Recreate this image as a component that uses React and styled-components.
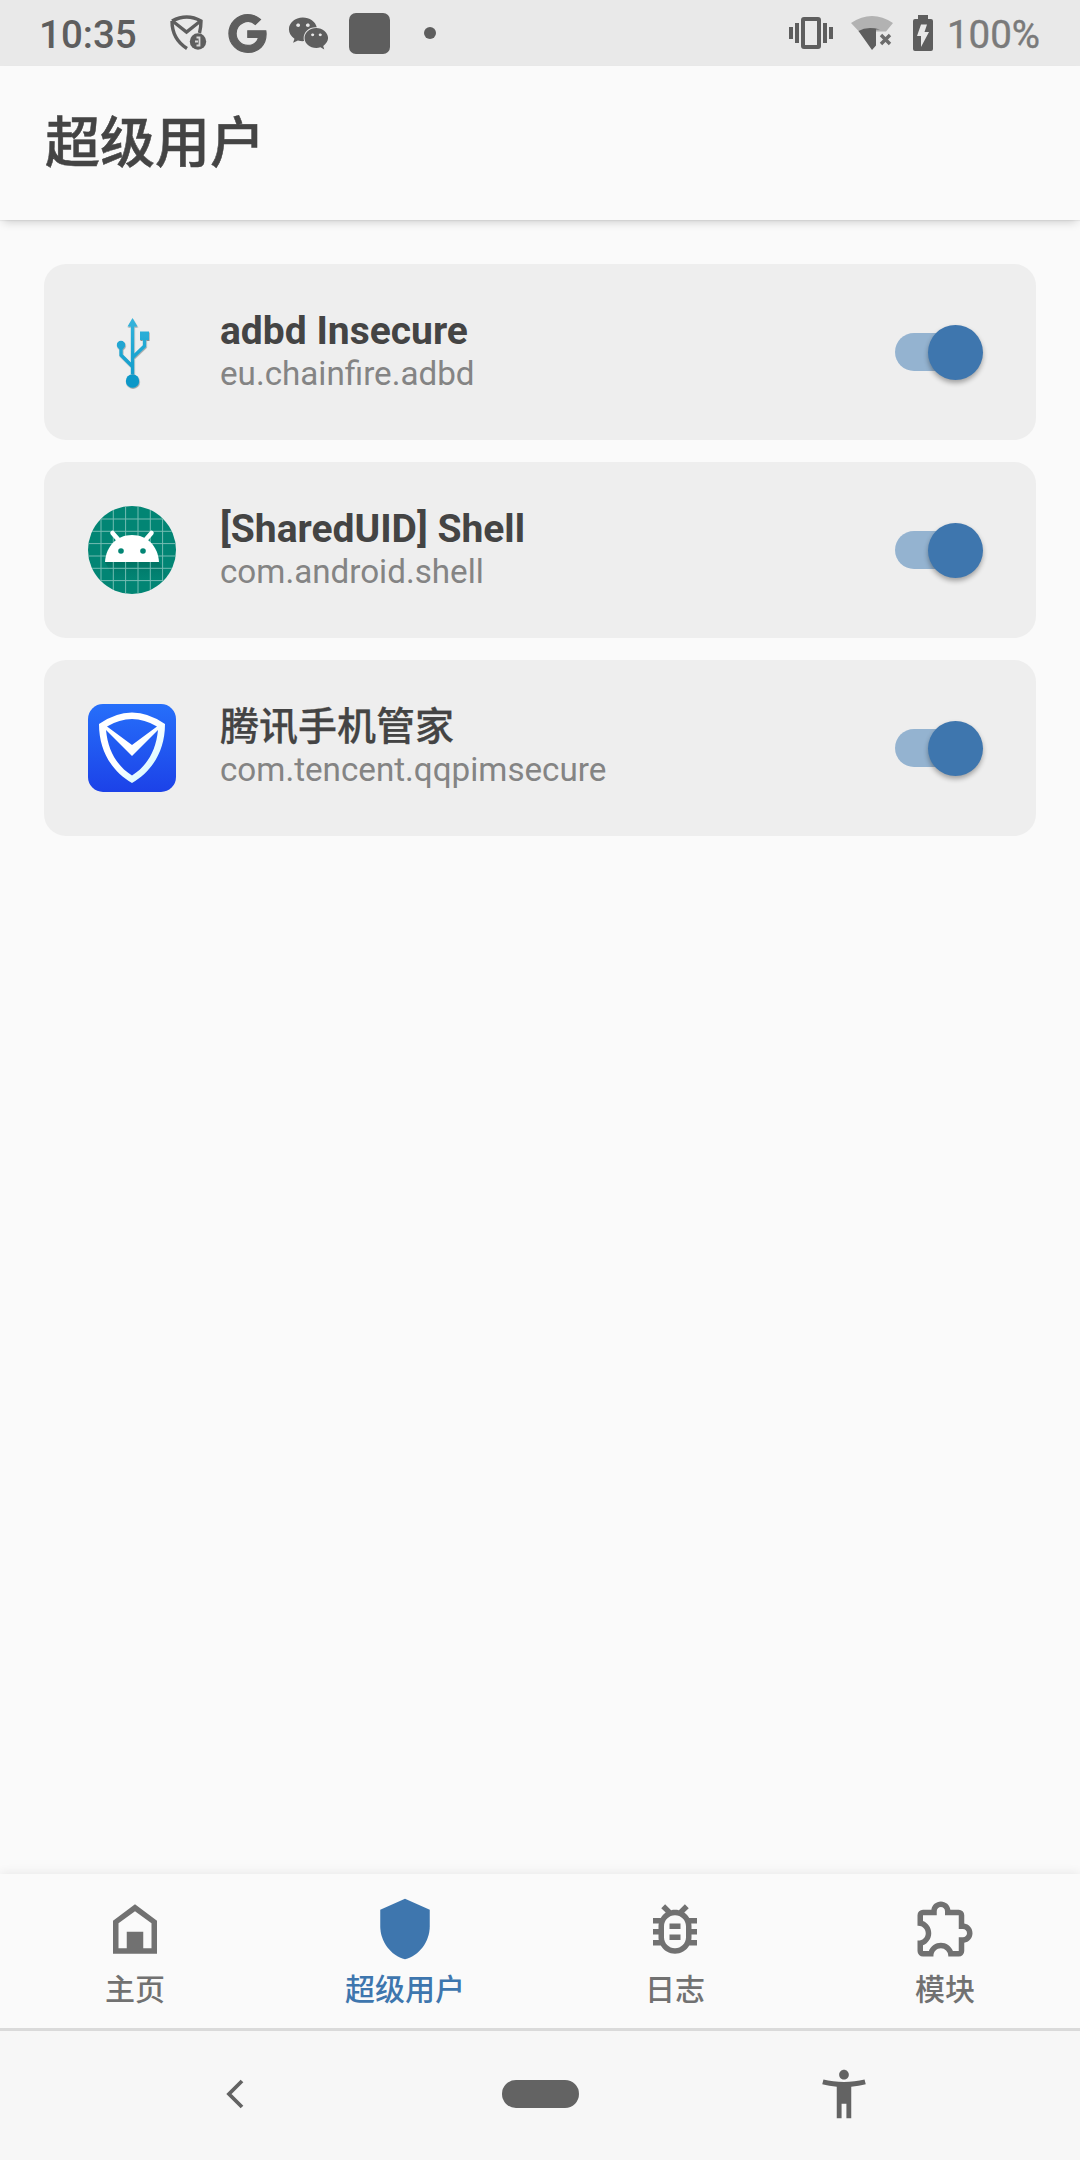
import React from "react";
import styled, { createGlobalStyle } from "styled-components";
import { FaGoogle, FaWeixin } from "react-icons/fa";

const GlobalStyle = createGlobalStyle`
  * { box-sizing: border-box; }
  body {
    margin: 0;
    background: #fafafa;
    font-family: Roboto, "Noto Sans CJK SC", sans-serif;
  }
`;

const Screen = styled.div`
  width: 1080px;
  height: 2160px;
  display: flex;
  flex-direction: column;
  background: #fafafa;
  overflow: hidden;
`;

const StatusBar = styled.header`
  height: 66px;
  flex: none;
  display: flex;
  align-items: center;
  justify-content: space-between;
  padding: 0 40px 0 39px;
  background: #e9e9e9;
  color: #5e5e5e;
`;

const StatusGroup = styled.div`
  display: flex;
  align-items: center;
  height: 66px;
`;

const Clock = styled.span`
  width: 131px;
  font-size: 38.5px;
  line-height: 66px;
  font-weight: 500;
  padding-top: 3px;
`;

const BatteryText = styled.span`
  font-size: 38.5px;
  line-height: 66px;
  padding-top: 3px;
  margin-left: 14px;
  color: #7a7a7a;
  -webkit-text-stroke: 0.4px #7a7a7a;
`;

const StatusIcon = styled.span`
  display: flex;
  margin-left: ${(p) => p.$gap || 0}px;
`;

const Square = styled.span`
  width: 41px;
  height: 41px;
  margin-left: 20px;
  border-radius: 7px;
  background: #5e5e5e;
`;

const Dot = styled.span`
  width: 12px;
  height: 12px;
  margin-left: 34px;
  border-radius: 50%;
  background: #5e5e5e;
`;

const Toolbar = styled.div`
  height: 154px;
  flex: none;
  display: flex;
  align-items: center;
  padding: 0 45px;
  background: #fafafa;
  box-shadow: 0 5px 9px -3px rgba(0, 0, 0, 0.18), 0 1px 1px rgba(0, 0, 0, 0.05);
`;

const Title = styled.h1`
  margin: 0;
  font-size: 55px;
  line-height: 80px;
  font-weight: 500;
  color: #444;
  -webkit-text-stroke: 0.5px #444;
`;

const List = styled.main`
  flex: 1;
  display: flex;
  flex-direction: column;
  gap: 22px;
  padding: 44px;
`;

const Card = styled.section`
  height: 176px;
  display: flex;
  align-items: center;
  padding: 0 53.5px 0 44px;
  border-radius: 22px;
  background: #eee;
`;

const AppIcon = styled.div`
  width: 88px;
  height: 88px;
  flex: none;
`;

const AppText = styled.div`
  flex: 1;
  margin: 0 0 2px 44px;
`;

const AppName = styled.div`
  font-size: 39px;
  line-height: 45px;
  height: 45px;
  font-weight: ${(p) => (p.$cjk ? 500 : 700)};
  color: #444;
  -webkit-text-stroke: ${(p) => (p.$cjk ? "0.25px #444" : "0")};
`;

const PackageName = styled.div`
  font-size: 33.2px;
  line-height: 39px;
  height: 39px;
  color: #848484;
`;

const Track = styled.div`
  width: 87.5px;
  height: 38px;
  display: flex;
  align-items: center;
  justify-content: flex-end;
  border-radius: 19px;
  background: linear-gradient(90deg, #94b3d0 85%, transparent 85%);
`;

const Thumb = styled.div`
  width: 55px;
  height: 55px;
  border-radius: 50%;
  background: #3e76ae;
  box-shadow: 0 3px 5px rgba(0, 0, 0, 0.32);
`;

const Tabs = styled.nav`
  height: 154px;
  flex: none;
  display: flex;
  background: #fafafa;
  box-shadow: 0 -1px 10px rgba(0, 0, 0, 0.08);
`;

const Tab = styled.div`
  flex: 1;
  display: flex;
  flex-direction: column;
  align-items: center;
  padding-top: 22px;
  color: ${(p) => (p.$active ? "#3e76ae" : "#717171")};
`;

const TabLabel = styled.span`
  margin-top: 6px;
  font-size: 30px;
  line-height: 44px;
  font-weight: 500;
`;

const SystemBar = styled.footer`
  height: 132px;
  flex: none;
  display: flex;
  align-items: center;
  justify-content: space-between;
  padding: 0 207px 3px 207px;
  border-top: 3px solid #dadada;
  background: #f7f7f7;
  color: #636363;
`;

const HomePill = styled.div`
  width: 77px;
  height: 28px;
  border-radius: 14px;
  background: #636363;
`;

const TAB_PATHS = {
  home: "M12 3l8 6v12H4V9zM12 5.5L6 9.9V19h3v-6h6v6h3V9.9z",
  shield: "M12 1L3 5v6c0 5.55 3.84 10.74 9 12 5.16-1.26 9-6.45 9-12V5z",
  bug: "M20 8H17.19C16.74 7.2 16.12 6.5 15.37 6L17 4.41L15.59 3L13.42 5.17C12.96 5.06 12.5 5 12 5S11.05 5.06 10.59 5.17L8.41 3L7 4.41L8.62 6C7.87 6.5 7.26 7.21 6.81 8H4V10H6.09C6.03 10.33 6 10.66 6 11V12H4V14H6V15C6 15.34 6.03 15.67 6.09 16H4V18H6.81C8.47 20.87 12.14 21.84 15 20.18C15.91 19.66 16.67 18.9 17.19 18H20V16H17.91C17.97 15.67 18 15.34 18 15V14H20V12H18V11C18 10.66 17.97 10.33 17.91 10H20V8M16 15C16 17.21 14.21 19 12 19S8 17.21 8 15V11C8 8.79 9.79 7 12 7S16 8.79 16 11V15M14 10V12H10V10H14M10 14H14V16H10V14Z",
  puzzle:
    "M22,13.5C22,15.26 20.7,16.72 19,16.96V20A2,2 0 0,1 17,22H13.2V21.7A2.7,2.7 0 0,0 10.5,19C9,19 7.8,20.21 7.8,21.7V22H4A2,2 0 0,1 2,20V16.2H2.3C3.79,16.2 5,15 5,13.5C5,12 3.79,10.8 2.3,10.8H2V7A2,2 0 0,1 4,5H7.04C7.28,3.3 8.74,2 10.5,2C12.26,2 13.72,3.3 13.96,5H17A2,2 0 0,1 19,7V10.04C20.7,10.28 22,11.74 22,13.5M17,15H18.5A1.5,1.5 0 0,0 20,13.5A1.5,1.5 0 0,0 18.5,12H17V7H12V5.5A1.5,1.5 0 0,0 10.5,4A1.5,1.5 0 0,0 9,5.5V7H4V9.12C5.76,9.8 7,11.55 7,13.5C7,15.45 5.75,17.2 4,17.88V20H6.12C6.8,18.25 8.55,17 10.5,17C12.45,17 14.2,18.25 14.88,20H17V15Z",
};

const TabIcon = ({ name }) => (
  <svg width="66" height="66" viewBox="0 0 24 24" fill="currentColor" fillRule="evenodd">
    <path d={TAB_PATHS[name]} />
  </svg>
);

const GuardStatusIcon = () => (
  <svg width="38" height="38" viewBox="0 0 38 38" fill="none">
    <path d="M2 7Q17 -1 31 7Q31 13 29.500 19M2 7Q2 25 17 34.500" stroke="#5e5e5e" strokeWidth="3.400" />
    <path d="M2.500 7L16.500 18L30.500 7" stroke="#5e5e5e" strokeWidth="3.400" />
    <circle cx="28" cy="27.500" r="8.200" fill="#5e5e5e" />
    <path d="M26.500 23.500h3v8h-3M25 27.500h3" stroke="#d8d8d8" strokeWidth="1.800" />
  </svg>
);

const VibrateIcon = () => (
  <svg width="44" height="34" viewBox="0 0 44 34">
    <rect x="14" y="3" width="16" height="28" rx="1" fill="none" stroke="#5e5e5e" strokeWidth="4" />
    <path d="M0 11h4v12H0zM6 7h4v20H6zM34 7h4v20h-4zM40 11h4v12h-4z" fill="#5e5e5e" />
  </svg>
);

const WifiIcon = () => (
  <svg width="43" height="34" viewBox="0 0 43 34">
    <path d="M0 7Q21 -7 42 7L35 15.500H24L21 20L8 15.500Z" fill="#b2b2b2" />
    <path d="M7.500 15Q16 10 29 13.500H25V29.500L21 34Z" fill="#5e5e5e" />
    <path d="M30 19l9 9M39 19l-9 9" stroke="#6c6c6c" strokeWidth="3.400" />
  </svg>
);

const BatteryIcon = () => (
  <svg width="20" height="36" viewBox="0 0 20 36">
    <path d="M5 0h10v4h3q2 0 2 2v28q0 2-2 2H2q-2 0-2-2V6q0-2 2-2h3z" fill="#5e5e5e" />
    <path d="M8 9.500h6L11.500 17H16L8 32V21H4z" fill="#e9e9e9" />
  </svg>
);

const UsbIcon = () => (
  <svg width="88" height="88" viewBox="0 0 88 88">
    <defs>
      <linearGradient id="usb" x1="0" y1="10" x2="0" y2="78" gradientUnits="userSpaceOnUse">
        <stop offset="0" stopColor="#35b4dc" />
        <stop offset="1" stopColor="#0a98c8" />
      </linearGradient>
      <filter id="usbShadow" x="-20%" y="-20%" width="140%" height="140%">
        <feDropShadow dx="0.500" dy="1" stdDeviation="0.600" floodOpacity="0.400" />
      </filter>
    </defs>
    <g filter="url(#usbShadow)">
      <path
        d="M44.500 16V66M33 36V47L44.500 58.500M56.500 28V38L44.500 49.500"
        fill="none" stroke="url(#usb)" strokeWidth="3.300"
      />
      <path d="M44.500 10l5 8.500h-10zM52 23.500h9v8.500h-9z" fill="url(#usb)" />
      <circle cx="33" cy="37" r="4.200" fill="#20a6d2" />
      <circle cx="44.500" cy="73" r="6.700" fill="#0a98c8" />
    </g>
  </svg>
);

const GRID = [13, 25.3, 37.6, 50, 62.3, 74.6];

const AndroidIcon = () => (
  <svg width="88" height="88" viewBox="0 0 88 88">
    <defs>
      <clipPath id="disc"><circle cx="44" cy="44" r="44" /></clipPath>
      <linearGradient id="cast" x1="0" y1="56" x2="0" y2="80" gradientUnits="userSpaceOnUse">
        <stop offset="0" stopColor="#006b5c" stopOpacity="0.700" />
        <stop offset="1" stopColor="#008577" stopOpacity="0" />
      </linearGradient>
    </defs>
    <g clipPath="url(#disc)">
      <rect width="88" height="88" fill="#028574" />
      <path d="M17 56h54l12 20v12H34z" fill="url(#cast)" />
      {GRID.map((p) => (
        <path key={p} d={`M${p} 0V88M0 ${p}H88`} stroke="#74bcb2" strokeWidth="1" />
      ))}
    </g>
    <path d="M17 56C18 40 29 29 44 29S70 40 71 56z" fill="#fff" />
    <path d="M24.500 27l7 8M63.500 27l-7 8" stroke="#fff" strokeWidth="4.500" strokeLinecap="round" />
    <circle cx="33" cy="45" r="2.800" fill="#028574" />
    <circle cx="55" cy="45" r="2.800" fill="#028574" />
  </svg>
);

const GuardIcon = () => (
  <svg width="88" height="88" viewBox="0 0 88 88">
    <defs>
      <linearGradient id="guardBg" x1="0" y1="0" x2="0" y2="1">
        <stop offset="0" stopColor="#266ffa" />
        <stop offset="1" stopColor="#1c42e8" />
      </linearGradient>
      <linearGradient id="guardFg" x1="0" y1="0" x2="1" y2="1">
        <stop offset="0.500" stopColor="#fff" />
        <stop offset="1" stopColor="#c4f6ff" />
      </linearGradient>
    </defs>
    <rect width="88" height="88" rx="15" fill="url(#guardBg)" />
    <path
      fillRule="evenodd" fill="url(#guardFg)"
      d="M11 20Q44 -3 77 20C77 48 63 68 44 79C25 68 11 48 11 20zM18 26C20 47 29 62 44 71.500C59 62 68 47 70 26L44 52zM19 22.500L44 41L69 22.500Q44 7.500 19 22.500z"
    />
  </svg>
);

const APPS = [
  { name: "adbd Insecure", pkg: "eu.chainfire.adbd", Icon: UsbIcon },
  { name: "[SharedUID] Shell", pkg: "com.android.shell", Icon: AndroidIcon },
  { name: "腾讯手机管家", pkg: "com.tencent.qqpimsecure", Icon: GuardIcon, cjk: true },
];

const TABS = [
  { label: "主页", icon: "home" },
  { label: "超级用户", icon: "shield", active: true },
  { label: "日志", icon: "bug" },
  { label: "模块", icon: "puzzle" },
];

export default function App() {
  return (
    <Screen>
      <GlobalStyle />
      <StatusBar>
        <StatusGroup>
          <Clock>10:35</Clock>
          <StatusIcon><GuardStatusIcon /></StatusIcon>
          <StatusIcon $gap={20}><FaGoogle size={39} stroke="#5e5e5e" strokeWidth={16} /></StatusIcon>
          <StatusIcon $gap={21}><FaWeixin size={41} /></StatusIcon>
          <Square />
          <Dot />
        </StatusGroup>
        <StatusGroup>
          <StatusIcon><VibrateIcon /></StatusIcon>
          <StatusIcon $gap={18}><WifiIcon /></StatusIcon>
          <StatusIcon $gap={19}><BatteryIcon /></StatusIcon>
          <BatteryText>100%</BatteryText>
        </StatusGroup>
      </StatusBar>
      <Toolbar><Title>超级用户</Title></Toolbar>
      <List>
        {APPS.map(({ name, pkg, Icon, cjk }) => (
          <Card key={pkg}>
            <AppIcon><Icon /></AppIcon>
            <AppText>
              <AppName $cjk={cjk}>{name}</AppName>
              <PackageName>{pkg}</PackageName>
            </AppText>
            <Track><Thumb /></Track>
          </Card>
        ))}
      </List>
      <Tabs>
        {TABS.map(({ label, icon, active }) => (
          <Tab key={icon} $active={active}>
            <TabIcon name={icon} />
            <TabLabel>{label}</TabLabel>
          </Tab>
        ))}
      </Tabs>
      <SystemBar>
        <svg width="58" height="58" viewBox="0 0 58 58">
          <path d="M35 16L22 29L35 42" fill="none" stroke="currentColor" strokeWidth="3.800" />
        </svg>
        <HomePill />
        <svg width="58" height="58" viewBox="0 0 24 24" fill="currentColor">
          <path d="M20.500 6c-2.610.7-5.670 1-8.500 1s-6.110-.3-8.500-1L3 8c1.860.5 4 .83 6 1v13h2v-6h2v6h2V9c2-.17 4.140-.5 6-1l-.5-2zM12 6c1.100 0 2-.9 2-2s-.9-2-2-2-2 .9-2 2 .9 2 2 2z" />
        </svg>
      </SystemBar>
    </Screen>
  );
}
